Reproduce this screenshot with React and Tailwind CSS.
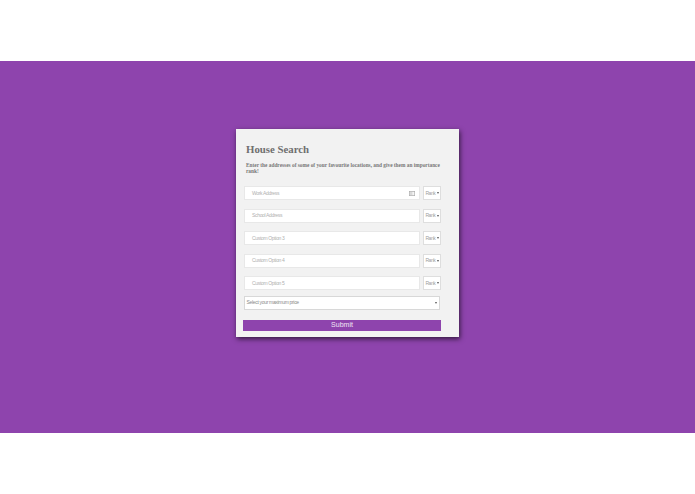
function Row({ label, icon, mt }) {
  return (
    <div className={`flex gap-[3px] h-[14px] ${mt}`}>
      <div className="w-[176px] h-full bg-white border border-[#e8e8e8] flex items-center justify-between pl-[7px] pr-[4px] text-[5px] tracking-[-0.33px] text-[#b0b0b0]">
        <span className="pt-[1px]">{label}</span>
        {icon && (
          <svg width="6" height="5" viewBox="0 0 6 5" className="shrink-0">
            <rect x="0.25" y="0.25" width="5.5" height="4.5" fill="#d9d9d9" stroke="#a0a0a0" strokeWidth="0.5" />
            <rect x="3.4" y="1" width="1.7" height="3" fill="#f4f4f4" />
          </svg>
        )}
      </div>
      <div className="w-[18px] h-full bg-white border border-[#dedede] flex items-center justify-between pl-[1.5px] pr-[1.5px] text-[5px] tracking-[-0.5px] text-[#a0a0a0]">
        <span className="pt-[1px]">Rank</span>
        <span className="w-0 h-0 border-x-[1.2px] border-x-transparent border-t-[2px] border-t-[#555]" />
      </div>
    </div>
  );
}

export default function App() {
  return (
    <div className="w-[695px] h-[494px] bg-white flex flex-col font-['Liberation_Sans',Arial,sans-serif]">
      <div className="h-[61px] shrink-0" />
      <div className="h-[372px] shrink-0 bg-[#8e44ad] flex justify-center pt-[68px]">
        <div className="w-[223px] h-[208px] bg-[#f2f2f2] shadow-[1px_2px_5px_rgba(0,0,0,0.65)] pl-[7px] pr-[18px] pt-[13px]">
          <h1 className="ml-[3px] text-[10.8px] leading-[15px] font-bold text-[#6f6f6f] font-['Liberation_Serif',serif]">House Search</h1>
          <p className="ml-[3px] mt-[5px] w-[200px] text-[5.35px] leading-[6px] font-bold text-[#777] font-['Liberation_Serif',serif]">
            Enter the addresses of some of your favourite locations, and give them an importance rank!
          </p>
          <div className="ml-[1px] mt-[12px] flex flex-col">
            <Row label="Work Address" icon mt="" />
            <Row label="School Address" mt="mt-[8.5px]" />
            <Row label="Custom Option 3" mt="mt-[8.5px]" />
            <Row label="Custom Option 4" mt="mt-[8.5px]" />
            <Row label="Custom Option 5" mt="mt-[8.5px]" />
          </div>
          <div className="ml-[1px] mt-[5.5px] w-[196px] h-[14px] bg-white border border-[#d8d8d8] flex items-center justify-between pl-[1.5px] pr-[2px] text-[5px] tracking-[-0.32px] text-[#8a8a8a]">
            <span>Select your maximum price</span>
            <span className="w-0 h-0 border-x-[1.2px] border-x-transparent border-t-[2px] border-t-[#555]" />
          </div>
          <button className="block mt-[10px] w-[198px] h-[11px] bg-[#8e44ad] text-[#f0e4f5] text-[7px] leading-[10px] pb-[1px] text-center">Submit</button>
        </div>
      </div>
      <div className="flex-1" />
    </div>
  );
}
